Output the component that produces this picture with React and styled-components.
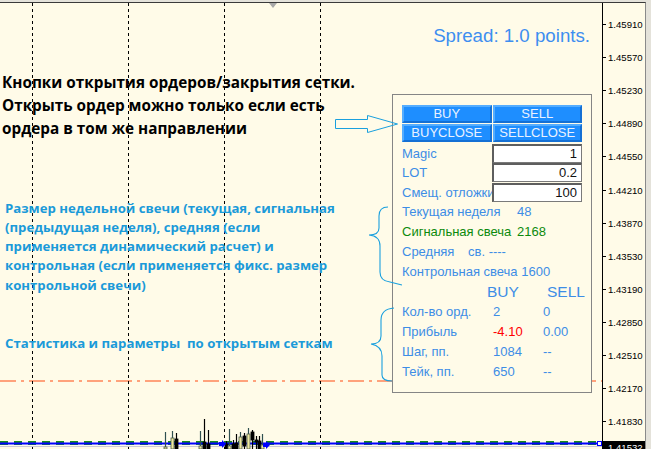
import styled, { createGlobalStyle } from 'styled-components'

const CREAM = '#fffbe8'
const NOTE_BLUE = '#1b9ad9'
const PANEL_BLUE = '#3d8de6'

const GlobalStyle = createGlobalStyle`
  html, body { margin:0; padding:0; background:#e4e2da; }
  body { font-family:"Liberation Sans", Arial, sans-serif; }
`

const Window = styled.div`
  width:651px;
  height:449px;
  overflow:hidden;
  display:flex;
  padding-top:2px;
  box-sizing:border-box;
  background:#e4e2da;
`

const Frame = styled.div`
  display:flex;
  border-top:1px solid #3a3a3a;
  border-right:1px solid #8a8a8a;
  background:${CREAM};
`

const Chart = styled.div`
  position:relative;
  width:602px;
  border-right:1px solid #000;
  display:flex;
  flex-direction:column;
  overflow:hidden;
`

// drawing layers use page coordinates, chart starts at y=3
const Layer = styled.svg`
  position:absolute;
  left:0;
  top:-3px;
  width:602px;
  height:449px;
  pointer-events:none;
  z-index:${p => p.$front ? 2 : 0};
`

const Spread = styled.div`
  position:relative;
  z-index:1;
  margin-top:22px;
  padding-right:12px;
  text-align:right;
  font-size:18.7px;
  line-height:22px;
  color:#3d8ef0;
`

const Body = styled.div`
  position:relative;
  z-index:1;
  display:flex;
  align-items:flex-start;
`

const Notes = styled.div`
  width:392px;
  padding-top:23.5px;
  font-family:"Open Sans", "Noto Sans", sans-serif;
  font-weight:700;
`

const Heading = styled.div`
  padding-left:2px;
  font-size:15.3px;
  line-height:23px;
  color:#000;
  white-space:nowrap;
`

const Note = styled.div`
  margin-top:${p => p.$gap}px;
  padding-left:5px;
  font-size:13.2px;
  line-height:19.25px;
  color:${NOTE_BLUE};
  white-space:pre;
`

const Panel = styled.div`
  margin-top:47px;
  width:200px;
  box-sizing:border-box;
  border:1px solid #858585;
  background:${CREAM};
  padding:10px 9px 10px 9px;
  font-size:13px;
  color:${PANEL_BLUE};
`

const ButtonGrid = styled.div`
  display:grid;
  grid-template-columns:1fr 1fr;
  column-gap:1px;
  row-gap:1px;
`

const Btn = styled.div`
  height:18px;
  box-sizing:border-box;
  background:#1e8eff;
  border-top:2px solid #55adff;
  border-left:2px solid #55adff;
  border-bottom:2px solid #1570d4;
  border-right:2px solid #1570d4;
  color:#eaf2ff;
  font-size:13px;
  line-height:14px;
  text-align:center;
`

const Fields = styled.div`
  margin-top:2px;
`

const FieldRow = styled.div`
  display:grid;
  grid-template-columns:90px 90px;
  height:19.3px;
  align-items:center;
`

const FieldLabel = styled.div`
  overflow:hidden;
  white-space:nowrap;
  line-height:19px;
`

const Input = styled.div`
  height:19px;
  box-sizing:border-box;
  background:#fff;
  border:1px solid #7a7a7a;
  border-top:2px solid #5e5e5e;
  border-left:2px solid #5e5e5e;
  padding-right:4px;
  text-align:right;
  color:#111;
  font-size:13px;
  line-height:16px;
`

const WeekRow = styled.div`
  display:flex;
  height:20px;
  line-height:20px;
  white-space:nowrap;
  color:${p => p.$color || PANEL_BLUE};
  span:first-child { width:${p => p.$label ? p.$label + 'px' : 'auto'}; }
`

const StatHead = styled.div`
  display:grid;
  grid-template-columns:85px 60px 1fr;
  height:20px;
  line-height:20px;
  font-size:15.5px;
`

const StatRow = styled.div`
  display:grid;
  grid-template-columns:91px 50px 1fr;
  height:20px;
  line-height:20px;
  white-space:nowrap;
`

const Value = styled.span`
  color:${p => p.$color || PANEL_BLUE};
`

const Axis = styled.div`
  position:relative;
  width:42px;
  padding-top:5px;
  display:flex;
  flex-direction:column;
`

const Price = styled.div`
  height:33.1px;
  display:flex;
  align-items:center;
  gap:2px;
  font-size:9.6px;
  color:#000;
  &::before {
    content:'';
    width:3px;
    height:1px;
    background:#000;
  }
`

const CurrentPrice = styled.div`
  position:absolute;
  left:0;
  top:438px;
  width:42px;
  height:13px;
  background:#000;
  color:#fff;
  font-size:9.6px;
  line-height:13px;
  padding-left:5px;
  box-sizing:border-box;
`

const Strip = styled.div`
  flex:1;
`

const prices = ['1.45910','1.45570','1.45230','1.44890','1.44550','1.44210','1.43870',
  '1.43530','1.43190','1.42850','1.42510','1.42170','1.41830']

const candles = [
  { x:165, hi:432, top:447, bot:449, bull:true },
  { x:172, hi:431, top:438, bot:449, bull:true },
  { x:176, hi:433, top:439, bot:449, bull:false },
  { x:200, hi:431, top:446, bot:449, bull:true },
  { x:204, hi:419, top:442, bot:449, bull:false },
  { x:208, hi:430, top:444, bot:449, bull:false },
  { x:226, hi:441, top:444, bot:449, bull:false },
  { x:229, hi:429, top:446, bot:449, bull:true },
  { x:233, hi:440, top:444, bot:449, bull:false },
  { x:236, hi:434, top:443, bot:449, bull:false },
  { x:240, hi:432, top:437, bot:449, bull:true },
  { x:244, hi:433, top:436, bot:446, bull:false },
  { x:248, hi:428, top:434, bot:449, bull:true },
  { x:252, hi:430, top:432, bot:440, bull:false },
  { x:256, hi:436, top:440, bot:442, bull:false },
  { x:259, hi:436, top:441, bot:449, bull:false },
  { x:262, hi:434, top:445, bot:449, bull:true },
]

const ChartBackground = () => (
  <Layer $front={false} viewBox="0 0 602 449">
    <line x1="0" y1="381" x2="602" y2="381" stroke="#ff4a10" strokeWidth="1.2" strokeDasharray="16 5 3 5" />
    {[32, 128, 224, 320].map(x => (
      <line key={x} x1={x + 0.5} y1="3" x2={x + 0.5} y2="449" stroke="#000" strokeDasharray="3 3" />
    ))}
    <polygon points="269,3 277,3 273,8" fill="#a8a8a8" />
    <line x1="0" y1="443" x2="602" y2="443" stroke="#1a8a1a" strokeWidth="4" strokeDasharray="8 6" />
    <line x1="0" y1="443.5" x2="602" y2="443.5" stroke="#0000ff" strokeWidth="2" />
    <line x1="0" y1="446.5" x2="602" y2="446.5" stroke="#c8c8d8" strokeWidth="1" />
    {candles.map(c => (
      <g key={c.x}>
        <line x1={c.x + 0.5} y1={c.hi} x2={c.x + 0.5} y2="449" stroke={c.bull ? '#2f4f4f' : '#000'} strokeWidth="1.2" />
        <rect x={c.x - 1} y={c.top} width="3" height={c.bot - c.top}
          fill={c.bull ? '#eee8a0' : '#000'} stroke={c.bull ? '#4a5a4a' : '#000'} strokeWidth="0.8" />
      </g>
    ))}
    <path d="M219 442 h3 v-2 l4 4 l-4 4 v-2 h-3z" fill="#0000ff" />
    <path d="M263 443 h3 v-2 l4 4 l-4 4 v-2 h-3z" fill="#0000ff" />
    <rect x="597.5" y="441.5" width="4" height="4" fill="#fff" stroke="#0000ff" />
  </Layer>
)

const Annotations = () => (
  <Layer $front viewBox="0 0 602 449">
    <polygon points="335.5,119.5 367.5,119.5 367.5,115.5 397.5,124 367.5,132.5 367.5,128.5 335.5,128.5"
      fill="none" stroke="#1aa0de" strokeWidth="1" />
    <path d="M388 207 Q379 207 379 216 L379 228 Q379 235 369 235 Q380 236 380 246 L380 272 Q380 281 390 282 L402 285"
      fill="none" stroke="#1aa0de" strokeWidth="1.1" />
    <path d="M394 308 Q381 309 381 320 L381 336 Q381 344 371 344 Q382 346 382 356 L382 375 Q382 381 392 381"
      fill="none" stroke="#1aa0de" strokeWidth="1.1" />
  </Layer>
)

const App = () => (
  <Window>
    <GlobalStyle />
    <Frame>
      <Chart>
        <ChartBackground />
        <Spread>Spread: 1.0 points.</Spread>
        <Body>
          <Notes>
            <Heading>
              Кнопки открытия ордеров/закрытия сетки.<br />
              Открыть ордер можно только если есть<br />
              ордера в том же направлении
            </Heading>
            <Note $gap={59}>
              {'Размер недельной свечи (текущая, сигнальная\n(предыдущая неделя), средняя (если\nприменяется динамический расчет) и\nконтрольная (если применяется фикс. размер\nконтрольной свечи)'}
            </Note>
            <Note $gap={39}>{'Статистика и параметры  по открытым сеткам'}</Note>
          </Notes>
          <Panel>
            <ButtonGrid>
              <Btn>BUY</Btn>
              <Btn>SELL</Btn>
              <Btn>BUYCLOSE</Btn>
              <Btn>SELLCLOSE</Btn>
            </ButtonGrid>
            <Fields>
              <FieldRow><FieldLabel>Magic</FieldLabel><Input>1</Input></FieldRow>
              <FieldRow><FieldLabel>LOT</FieldLabel><Input>0.2</Input></FieldRow>
              <FieldRow><FieldLabel>Смещ. отложки</FieldLabel><Input>100</Input></FieldRow>
            </Fields>
            <div>
              <WeekRow $label={115}><span>Текущая неделя</span><span>48</span></WeekRow>
              <WeekRow $label={115} $color="#0c8a0c"><span>Сигнальная свеча</span><span>2168</span></WeekRow>
              <WeekRow $label={66}><span>Средняя</span><span>св. ----</span></WeekRow>
              <WeekRow><span>Контрольная свеча 1600</span></WeekRow>
            </div>
            <StatHead><span /><span>BUY</span><span>SELL</span></StatHead>
            <StatRow><span>Кол-во орд.</span><Value>2</Value><Value>0</Value></StatRow>
            <StatRow><span>Прибыль</span><Value $color="#ff0000">-4.10</Value><Value>0.00</Value></StatRow>
            <StatRow><span>Шаг, пп.</span><Value>1084</Value><Value>--</Value></StatRow>
            <StatRow><span>Тейк, пп.</span><Value>650</Value><Value>--</Value></StatRow>
          </Panel>
        </Body>
        <Annotations />
      </Chart>
      <Axis>
        {prices.map(p => <Price key={p}>{p}</Price>)}
        <CurrentPrice>1.41532</CurrentPrice>
      </Axis>
    </Frame>
    <Strip />
  </Window>
)

export default App
